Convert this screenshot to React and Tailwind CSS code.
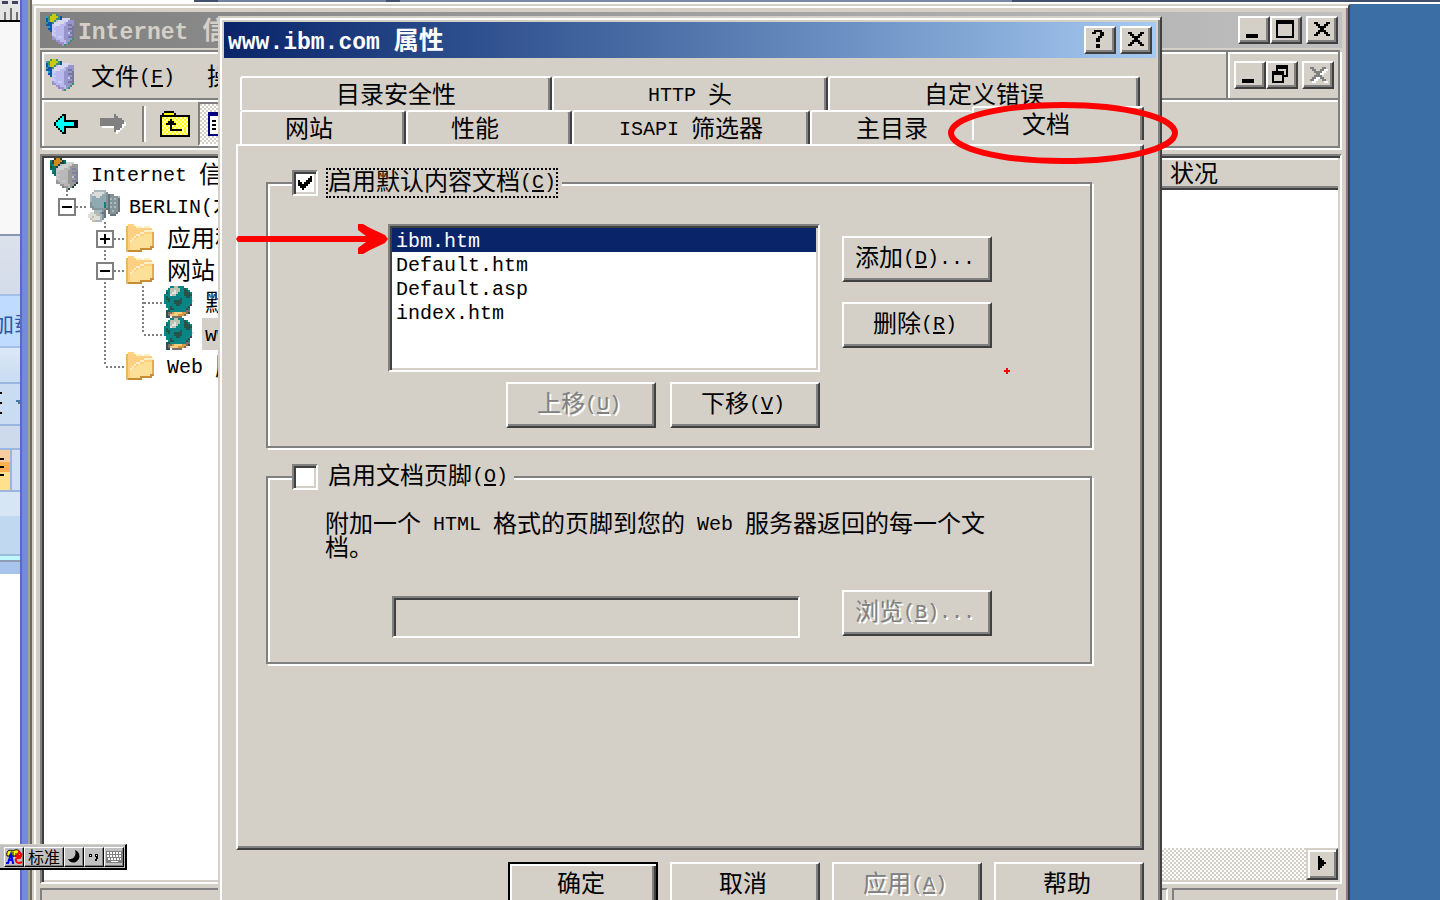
import { useState } from 'react';
import clsx from 'clsx';

// bitmaps: one character is one dot, looked up in the palette
const Bitmap = ({ rows, palette, size = 2, className }) => {
    const width = rows[0].length;
    return (
        <svg
            width={width * size}
            height={rows.length * size}
            viewBox={`0 0 ${width} ${rows.length}`}
            shapeRendering="crispEdges"
            className={clsx('block shrink-0', className)}
            aria-hidden="true"
        >
            {rows.map((row, y) =>
                row.split('').map((dot, x) =>
                    dot === '.' ? null : <rect key={`${x}-${y}`} x={x} y={y} width="1" height="1" fill={palette[dot]} />
                )
            )}
        </svg>
    );
};

const black = { x: '#000', w: '#fff', g: '#808080' };

const glyphs = {
    min: ['.........', '.........', '.........', '.........', '.........', '.........', '.........', '.xxxxxx..', '.xxxxxx..'],
    max: ['xxxxxxxxx', 'xxxxxxxxx', 'x.......x', 'x.......x', 'x.......x', 'x.......x', 'x.......x', 'x.......x', 'xxxxxxxxx'],
    restore: ['..xxxxxx', '..xxxxxx', '..x....x', 'xxxxxx.x', 'xxxxxx.x', 'x....xxx', 'x....x..', 'x....x..', 'xxxxxx..'],
    close: ['.........', '.xx....xx', '..xx..xx.', '...xxxx..', '....xx...', '...xxxx..', '..xx..xx.', '.xx....xx', '.........'],
    closeOff: ['..........', '.gg....gg.', '..gg..ggww', '...ggggww.', '....ggww..', '...gggg...', '..ggwwgg..', '.ggww..gg.', '..ww....ww'],
    help: ['..xxxx..', '.xx..xx.', '.....xx.', '....xx..', '...xx...', '...xx...', '........', '...xx...', '...xx...'],
    tick: ['......x', '.....xx', 'x...xxx', 'xx.xxx.', 'xxxxx..', '.xxx...', '..x....'],
    right: ['x...', 'xx..', 'xxx.', 'xxxx', 'xxx.', 'xx..', 'x...']
};

const serverRows = [
    '..gyyg........',
    'cgyyyygb......',
    'bgyyyggbwwww..',
    'bcyyglwwwwwppp',
    'gbbgwwwwwlpppp',
    'bbbLwwwlllpddp',
    '.cbLLllllppppd',
    '.bbLlllllppddd',
    '..bLLllllppppd',
    '...LlllllppLdd',
    '...LLllllppppd',
    '...pllLLlppddd',
    '...ppllllppppg',
    '.....pplllppg.',
    '......mpplpg..',
    '........pg....'
];
const serverColors = { g: '#3f8f6a', y: '#c8c80c', b: '#0a58a8', c: '#2c9cd0', l: '#b9b9ee', L: '#cacaf6', w: '#d8d8f4', p: '#9696cc', d: '#77779c', m: '#c070d8' };
const rootColors = { g: '#24423c', y: '#d08a1c', b: '#0c6c6c', c: '#0c8c84', l: '#b8b8b8', L: '#c4c4c8', w: '#d0d0d0', p: '#989898', d: '#8080a0', m: '#808080' };

const computerRows = [
    '...llllll.......',
    '..lwwwwwlp......',
    '.lwwwwwbbpdpp...',
    '.lbbwwbbbpdppppl',
    '.lbbbbbbbpdlplpd',
    '.lbbbbbbbpdppppd',
    '.pbbbbbbtpdlplpd',
    '.pbbbbbbtpdppppd',
    '.ppbbbbbtpdlplpd',
    '..pppppppddppppd',
    '...llllpd.dplppd',
    '.wwlllpdd.dpppd.',
    'wwwwsllpd..ddd..',
    'wwswwwlpd.......',
    '.swwwwlp........',
    '..sslll.........'
];
const computerColors = { l: '#a8b8bc', w: '#dcdcd8', b: '#90aab4', p: '#849498', d: '#68747c', t: '#108070', s: '#c8bca8' };

const folderRows = [
    '.fff..........',
    'sffffwww.www..',
    'sffffffffffff.',
    'sffffffffwwwww',
    'sffffffwwffffe',
    'sffffwwffyyyye',
    'sfffwfyyyyyyye',
    'sffwfyyyyyyyye',
    'sfwyyyyyyyyyye',
    'sfyyyyyyyyyyye',
    'sfyyyyyyyyyyye',
    'sfyyyyyyyyyyoo',
    'sfyyyyyoooooo.',
    'sooooooo......'
];
const folderColors = { s: '#e8b860', f: '#fcd080', w: '#fff0c8', y: '#fce098', e: '#e0ac54', o: '#c88c34' };

const siteRows = [
    '...ttwwttt.....',
    '..twwwwwttgt...',
    '.ttwwlwwttggt..',
    '.gtwllwtttgggt.',
    'tttlwwttttgggg.',
    'tgtttttttttggt.',
    'tggtttttgttttt.',
    'ttgttggggtttttl',
    'tttttggggttttt.',
    '.tttttggtttttg.',
    '.ttgttttttttg..',
    '..tggttttttgt..',
    '.ggttttttttpp..',
    '.gppoyyyyoopg..',
    '.gpyyyyooopl...',
    '.gg.ppppp......'
];
const siteColors = { t: '#088484', g: '#24544c', w: '#b8c4b0', l: '#e4e4dc', p: '#806c68', o: '#d89838', y: '#f4cc80' };

// CJK runs are set at 24px and Latin runs at 20px, so a Latin letter is half a
// CJK one. "&" goes before the accelerator key.
const Label = ({ text, large = false }) =>
    text.split(/([\u3000-\u303f\u4e00-\u9fff]+)/).filter(Boolean).map((run, i) => {
        if (/[\u3000-\u9fff]/.test(run)) return <span key={i}>{run}</span>;
        const [before, after] = run.split('&');
        return (
            <span key={i} className={clsx("font-['Liberation_Mono','Noto_Sans_CJK_SC',monospace] leading-3", large ? 'text-[23px]' : 'align-[2px] text-[20px]')}>
                {before}
                {after && <span className="underline underline-offset-2">{after[0]}</span>}
                {after && after.slice(1)}
            </span>
        );
    });

const raised = 'border-2 border-t-white border-l-white border-r-[#404040] border-b-[#404040] shadow-[inset_-2px_-2px_0_#808080]';
const sunken = 'border-2 border-t-[#808080] border-l-[#808080] border-r-white border-b-white shadow-[inset_2px_2px_0_#404040,inset_-2px_-2px_0_#d4d0c8]';
const etched = 'border-2 border-[#808080] shadow-[2px_2px_0_#fff,inset_2px_2px_0_#fff]';

const CaptionButton = ({ glyph, label, disabled }) => (
    <button aria-label={label} disabled={disabled} className={clsx('flex h-7 w-8 shrink-0 items-start bg-[#d4d0c8] pt-[2px] pl-1', raised)}>
        <Bitmap rows={glyphs[glyph]} palette={black} />
    </button>
);

const PushButton = ({ text, disabled, isDefault, onClick }) => (
    <button
        onClick={onClick}
        disabled={disabled}
        className={clsx(
            'h-[46px] w-[150px] shrink-0 whitespace-nowrap bg-[#d4d0c8] pr-1 pb-[6px] leading-6',
            isDefault ? 'border-2 border-black shadow-[inset_2px_2px_0_#fff,inset_-2px_-2px_0_#404040,inset_-4px_-4px_0_#808080]' : raised,
            disabled && 'text-[#808080] [text-shadow:2px_2px_0_#fff]'
        )}
    >
        <Label text={text} />
    </button>
);

const CheckLabel = ({ id, text, checked, onChange, focused }) => (
    <div className="-mt-4 ml-6 flex h-[30px] w-fit items-center gap-2 bg-[#d4d0c8] pr-1">
        <span className="grid place-items-center">
            <input
                id={id}
                type="checkbox"
                checked={checked}
                onChange={onChange}
                className={clsx('col-start-1 row-start-1 h-[26px] w-[26px] appearance-none bg-white', sunken)}
            />
            {checked && <Bitmap rows={glyphs.tick} palette={black} className="pointer-events-none col-start-1 row-start-1" />}
        </span>
        <label htmlFor={id} className={clsx('h-[30px] border-2 leading-5', focused ? 'border-dotted border-black' : 'border-transparent')}>
            <Label text={text} />
        </label>
    </div>
);

const Tab = ({ text, className, selected }) => (
    <button
        role="tab"
        aria-selected={selected}
        className={clsx('h-[34px] whitespace-nowrap rounded-t-[3px] border-t-2 border-l-2 border-white bg-[#d4d0c8] pb-[2px] leading-6', className)}
    >
        <Label text={text} />
    </button>
);

const tabEdge = 'border-r-2 border-r-[#404040] shadow-[inset_-2px_0_0_#808080]';

const upperTabs = ['目录安全性', 'HTTP 头', '自定义错误'];
const lowerTabs = ['网站', '性能', 'ISAPI 筛选器'];

const documents = ['ibm.htm', 'Default.htm', 'Default.asp', 'index.htm'];

const PropertiesDialog = () => {
    const [useDefault, setUseDefault] = useState(true);
    const [useFooter, setUseFooter] = useState(false);
    const [selected, setSelected] = useState('ibm.htm');

    return (
        <div
            role="dialog"
            aria-label="www.ibm.com 属性"
            className="absolute top-4 left-[218px] w-[944px] border-2 border-t-[#d4d0c8] border-l-[#d4d0c8] border-r-[#404040] border-b-[#404040] bg-[#d4d0c8] p-1 shadow-[inset_2px_2px_0_#fff,inset_-2px_-2px_0_#808080]"
        >
            <div className="flex h-9 items-center gap-1 bg-linear-to-r from-[#0a246a] to-[#a6caf0] px-1 text-white">
                <h2 className="flex-1 pb-1 text-[25px] leading-7 font-bold">
                    <Label text="www.ibm.com 属性" large />
                </h2>
                <CaptionButton glyph="help" label="帮助" />
                <CaptionButton glyph="close" label="关闭" />
            </div>

            <div className="px-3 pt-[18px] pb-3">
                <div role="tablist">
                    <div className="mx-1 grid grid-cols-[26fr_23fr_26fr]">
                        {upperTabs.map((text) => (
                            <Tab key={text} text={text} className={tabEdge} />
                        ))}
                    </div>
                    <div className="ml-1 grid grid-cols-[83fr_83fr_119fr_81fr_86fr]">
                        {lowerTabs.map((text) => (
                            <Tab key={text} text={text} className={clsx(tabEdge, text.length === 2 && 'pr-7')} />
                        ))}
                        <Tab text="主目录" />
                        <Tab text="文档" selected className={clsx('relative -mt-1 -mb-[2px] h-10 pr-6', tabEdge)} />
                    </div>
                </div>

                <div role="tabpanel" className={clsx('pt-9 pr-[50px] pb-[184px] pl-7', raised)}>
                    <div className={clsx('pb-[18px]', etched)}>
                        <CheckLabel id="use-default" text="启用默认内容文档(&C)" focused checked={useDefault} onChange={() => setUseDefault(!useDefault)} />
                        <div className="mt-[26px] ml-[120px] flex gap-[22px]">
                            <div className="flex w-[432px] flex-col gap-[10px]">
                                <select
                                    size={5}
                                    aria-label="默认内容文档"
                                    value={selected}
                                    onChange={(e) => setSelected(e.target.value)}
                                    className={clsx("h-[148px] w-full appearance-none overflow-hidden bg-white bg-none p-[2px] font-['Liberation_Mono',monospace] text-[20px] outline-none", sunken)}
                                >
                                    {documents.map((name) => (
                                        <option
                                            key={name}
                                            value={name}
                                            className="h-6 min-h-6 px-1 pt-[2px] pb-0 leading-5 checked:bg-[linear-gradient(#0a246a,#0a246a)] checked:[-webkit-text-fill-color:#fff]"
                                        >
                                            {name}
                                        </option>
                                    ))}
                                </select>
                                <div className="flex justify-end gap-[14px]">
                                    <PushButton text="上移(&U)" disabled />
                                    <PushButton text="下移(&V)" />
                                </div>
                            </div>
                            <div className="flex flex-col gap-5 pt-3">
                                <PushButton text="添加(&D)..." />
                                <PushButton text="删除(&R)" />
                            </div>
                        </div>
                    </div>

                    <div className={clsx('mt-7 pb-6', etched)}>
                        <CheckLabel id="use-footer" text="启用文档页脚(&O)" checked={useFooter} onChange={() => setUseFooter(!useFooter)} />
                        <p className="mt-[18px] ml-[57px] w-[672px] leading-6">
                            <Label text="附加一个 HTML 格式的页脚到您的 Web 服务器返回的每一个文档。" />
                        </p>
                        <div className="mt-8 ml-[124px] flex gap-[42px]">
                            <input type="text" aria-label="文档页脚" disabled={!useFooter} className={clsx('mt-[6px] h-[42px] w-[408px] bg-[#d4d0c8] px-1', sunken)} />
                            <PushButton text="浏览(&B)..." disabled={!useFooter} />
                        </div>
                    </div>
                </div>

                <div className="mt-3 flex justify-end gap-3">
                    <PushButton text="确定" isDefault />
                    <PushButton text="取消" />
                    <PushButton text="应用(&A)" disabled />
                    <PushButton text="帮助" />
                </div>
            </div>
        </div>
    );
};

// one 38x32 cell of the tree's dotted connectors
const Branch = ({ up, down, right, box }) => (
    <svg width="38" height="32" viewBox="0 0 38 32" shapeRendering="crispEdges" className="block shrink-0" aria-hidden="true">
        <g stroke="#808080" strokeWidth="2" strokeDasharray="2 2">
            {up && <path d="M19 0V16" />}
            {down && <path d="M19 16V32" />}
            {right && <path d="M20 17H40" />}
        </g>
        {box && <rect x="11" y="9" width="16" height="16" fill="#fff" stroke="#808080" strokeWidth="2" />}
        {box && <path d="M14 17H24" stroke="#000" strokeWidth="2" />}
        {box === 'plus' && <path d="M19 12V22" stroke="#000" strokeWidth="2" />}
    </svg>
);

const treeIcons = {
    root: <Bitmap rows={serverRows} palette={rootColors} />,
    computer: <Bitmap rows={computerRows} palette={computerColors} />,
    folder: <Bitmap rows={folderRows} palette={folderColors} />,
    site: <Bitmap rows={siteRows} palette={siteColors} />
};

const treeItems = [
    { text: 'Internet 信息服务', icon: 'root', cells: [] },
    { text: 'BERLIN(本地计算机)', icon: 'computer', cells: [{ up: true, right: true, box: 'minus' }] },
    { text: '应用程序池', icon: 'folder', cells: [{}, { up: true, down: true, right: true, box: 'plus' }] },
    { text: '网站', icon: 'folder', cells: [{}, { up: true, down: true, right: true, box: 'minus' }] },
    { text: '默认网站', icon: 'site', cells: [{}, { up: true, down: true }, { up: true, down: true, right: true }] },
    { text: 'www.ibm.com', icon: 'site', active: true, cells: [{}, { up: true, down: true }, { up: true, right: true }] },
    { text: 'Web 服务扩展', icon: 'folder', cells: [{}, { up: true, right: true }] }
];

const Tree = () => (
    <ul role="tree" className="w-[300px] shrink-0 overflow-hidden bg-white pl-1">
        {treeItems.map((item) => (
            <li key={item.text} role="treeitem" className="flex h-8 items-center whitespace-nowrap leading-6">
                {item.cells.map((cell, i) => (
                    <Branch key={i} {...cell} />
                ))}
                <span className="flex w-10 shrink-0 pl-[2px]">{treeIcons[item.icon]}</span>
                <span className={clsx('flex h-8 items-center px-[3px] pb-[2px]', item.active && 'bg-[#d4d0c8]')}>
                    <span><Label text={item.text} /></span>
                </span>
            </li>
        ))}
    </ul>
);

const backRows = [
    '....xx......',
    '...xcx......',
    '..xccx......',
    '.xcccxxxxxxx',
    'xcccccccccxx',
    'xcccccccccxx',
    '.xcccxxxxxxx',
    '..xccx......',
    '...xcx......',
    '....xx......'
];
const forwardRows = [
    '.......g.....',
    '.......gg....',
    'ggggggggggg..',
    'gggggggggggg.',
    'ggggggggggggw',
    'gggggggggggww',
    '.wwwwwwggggw.',
    '.......gggw..',
    '.......gww...',
    '........w....'
];
const upRows = [
    '..xxxxx........',
    '.xyyyyyx.......',
    'xxxxxxxxxxxxxxx',
    'xywywywywywywyx',
    'xwywyxywywywywx',
    'xywyxxxywywywyx',
    'xwyxxxxxywywywx',
    'xywywxwywywywyx',
    'xwywyxywywywywx',
    'xywywxxxxxxwywx',
    'xwywywywywywywx',
    'xywywywywywywyx',
    'xxxxxxxxxxxxxxx'
];

const ConsoleWindow = () => (
    <div className="mt-1 flex min-w-0 flex-1 flex-col border-2 border-b-0 border-t-[#d4d0c8] border-l-[#d4d0c8] border-r-[#404040] bg-[#d4d0c8] px-[6px] pt-[6px] shadow-[inset_2px_2px_0_#fff,inset_-2px_0_0_#808080]">
        <div className="flex h-9 shrink-0 items-center bg-linear-to-r from-[#808080] to-[#c0c0c0] pr-1 pl-[6px] text-[#d4d0c8]">
            <Bitmap rows={serverRows} palette={serverColors} />
            <h1 className="ml-1 flex-1 pb-1 text-[25px] leading-7 font-bold">
                <Label text="Internet 信息服务" large />
            </h1>
            <CaptionButton glyph="min" label="最小化" />
            <CaptionButton glyph="max" label="最大化" />
            <span className="w-1" />
            <CaptionButton glyph="close" label="关闭" />
        </div>

        <div className={clsx('mt-[2px] mr-[2px] shrink-0', etched)}>
            <div className="flex h-[46px] items-center pl-1">
                <Bitmap rows={serverRows} palette={serverColors} />
                <nav className="ml-[17px] flex flex-1 gap-8 leading-6">
                    <button><Label text="文件(&F)" /></button>
                    <button><Label text="操作(&A)" /></button>
                </nav>
                <div className="flex h-full items-center border-l-2 border-[#808080] pr-1 pl-[6px] shadow-[inset_2px_0_0_#fff]">
                    <CaptionButton glyph="min" label="最小化" />
                    <CaptionButton glyph="restore" label="还原" />
                    <span className="w-1" />
                    <CaptionButton glyph="closeOff" label="关闭" disabled />
                </div>
            </div>
            <div className="flex h-12 items-center border-t-2 border-[#808080] pt-[2px] pl-3 shadow-[inset_0_2px_0_#fff]">
                <button aria-label="后退"><Bitmap rows={backRows} palette={{ x: '#000', c: '#00ffff' }} /></button>
                <button aria-label="前进" disabled className="ml-[22px]"><Bitmap rows={forwardRows} palette={black} /></button>
                <span className="ml-4 h-9 w-1 border-l-2 border-[#808080] bg-white" />
                <button aria-label="上一级" className="ml-[14px]"><Bitmap rows={upRows} palette={{ x: '#000', y: '#ffff00', w: '#ffffc0' }} /></button>
                <button
                    aria-label="显示树"
                    className="ml-2 h-[44px] w-[46px] border-2 border-t-[#808080] border-l-[#808080] border-r-white border-b-white bg-[repeating-conic-gradient(#fff_0_25%,#d4d0c8_0_50%)] bg-size-[4px_4px] pl-2"
                >
                    <svg width="30" height="24" viewBox="0 0 30 24" shapeRendering="crispEdges" aria-hidden="true">
                        <path d="M0 0H30V24H0Z" fill="#000080" />
                        <path d="M2 4H28V22H2Z" fill="#fff" />
                        <path d="M4 9H8M4 13H8M4 17H8M14 9H24M14 13H24" stroke="#000" strokeWidth="2" />
                    </svg>
                </button>
            </div>
        </div>

        <div className="mt-[6px] flex min-h-0 flex-1 border-2 border-t-[#808080] border-l-[#808080] border-r-white border-b-white p-[2px] shadow-[inset_2px_2px_0_#404040,inset_-2px_-2px_0_#d4d0c8]">
            <Tree />
            <div className="flex min-w-0 flex-1 flex-col bg-white">
                <div className="flex h-8 shrink-0 border-t-2 border-t-white border-b-2 border-b-[#404040] bg-[#d4d0c8] shadow-[inset_0_-2px_0_#808080]">
                    <span className="flex-1" />
                    <span className="w-44 pl-2 leading-6">状况</span>
                </div>
                <div className="flex-1" />
                <div className="flex h-8 shrink-0 justify-end bg-[repeating-conic-gradient(#fff_0_25%,#d4d0c8_0_50%)] bg-size-[4px_4px]">
                    <button
                        aria-label="向右滚动"
                        className="flex h-8 w-8 items-start border-2 border-t-[#d4d0c8] border-l-[#d4d0c8] border-r-[#404040] border-b-[#404040] bg-[#d4d0c8] pt-[6px] pl-[10px] shadow-[inset_2px_2px_0_#fff,inset_-2px_-2px_0_#808080]"
                    >
                        <Bitmap rows={glyphs.right} palette={black} />
                    </button>
                </div>
            </div>
        </div>

        <div className="mt-1 mr-1 flex h-3 shrink-0 gap-1">
            <span className="flex-1 border-2 border-b-0 border-t-[#808080] border-l-[#808080] border-r-white" />
            <span className="w-[166px] border-2 border-b-0 border-t-[#808080] border-l-[#808080] border-r-white" />
        </div>
    </div>
);

// edge of the editor that is open behind the console window
const EditorEdge = () => (
    <div className="flex w-8 shrink-0 bg-white">
        <div className="flex w-5 flex-col overflow-hidden">
            <svg width="20" height="22" viewBox="0 0 20 22" shapeRendering="crispEdges" className="shrink-0" aria-hidden="true">
                <path d="M0 0H20V20H0Z" fill="#e4e4e4" />
                <path d="M2 2H8M12 2H18" stroke="#404060" strokeWidth="3" />
                <path d="M5 12V20M11 8V20M17 12V20" stroke="#707070" strokeWidth="2" />
                <path d="M0 21H20" stroke="#000" strokeWidth="2" />
            </svg>
            <div className="h-[212px] shrink-0 bg-[#f8f8f8]" />
            <div className="h-[60px] shrink-0 border-t-2 border-[#8898b0] bg-linear-to-b from-[#dce2ec] to-[#d4dcea]" />
            <div className="h-[54px] shrink-0 border-y-2 border-[#a4c0e8] bg-[#bfdbff] pt-[14px] text-[22px] leading-6 whitespace-nowrap text-[#3058a8]">
                <span className="-ml-2">加载</span>
            </div>
            <div className="h-[34px] shrink-0 bg-linear-to-b from-[#dce8f6] to-[#c8dcf2]" />
            <svg width="20" height="44" viewBox="0 0 20 44" shapeRendering="crispEdges" className="shrink-0" aria-hidden="true">
                <path d="M0 0H20V44H0Z" fill="#9ab6de" />
                <path d="M0 2H20V42H0Z" fill="#cadcf2" />
                <path d="M0 11H2M0 21H2M0 31H2" stroke="#000" strokeWidth="2" />
                <path d="M16 18H20V22H18V20H16Z" fill="#4878b0" />
            </svg>
            <div className="h-[22px] shrink-0 bg-[#ccdaec]" />
            <svg width="20" height="44" viewBox="0 0 20 44" shapeRendering="crispEdges" className="shrink-0" aria-hidden="true">
                <path d="M0 0H20V44H0Z" fill="#9ab6de" />
                <path d="M12 2H20V42H12Z" fill="#d0e0f4" />
                <path d="M0 2H10V14H0Z" fill="#f8cc9c" />
                <path d="M0 14H10V24H0Z" fill="#ffb050" />
                <path d="M0 24H10V42H0Z" fill="#ffe08c" />
                <path d="M0 11H4M0 19H4M0 27H4" stroke="#000" strokeWidth="2" />
            </svg>
            <div className="h-6 shrink-0 bg-[#d6e6f4]" />
            <div className="h-[40px] shrink-0 border-b-2 border-[#9cbcdc] bg-[#c0d8f0]" />
            <div className="h-1 shrink-0 bg-[#c0f8ff]" />
            <div className="h-[14px] shrink-0 border-t-2 border-[#8c9cb4] bg-[#a8c4ea]" />
        </div>
        <div className="w-2 border-l-2 border-[#5c68c8] bg-[#748bdc]" />
        <div className="w-1 border-r-2 border-[#6e6a5e] bg-[#a8a494]" />
    </div>
);

const imeCell = 'flex h-5 items-center justify-center border border-t-white border-l-white border-r-black border-b-black bg-[#c0c0c0] shadow-[inset_-1px_-1px_0_#808080]';

const ImeBar = () => (
    <div className="absolute top-[844px] left-0 flex h-[26px] w-[127px] items-center border-t border-r-2 border-b-2 border-t-[#d4d0c8] border-r-black border-b-black bg-[#c0c0c0] pl-1 text-black">
        <button aria-label="输入法" className={clsx('w-5', imeCell)}>
            <svg width="18" height="17" viewBox="0 0 18 17" aria-hidden="true">
                <path d="M2 8C1 3 4 1 8 3C12 0 17 3 15 8Z" fill="#ffff00" stroke="#000" strokeWidth="1" />
                <path d="M5 6V9M8 4V9M11 5V9" stroke="#000" strokeWidth="1" />
                <path d="M1 15H3L6 6L8 15H9M3 12H8" fill="none" stroke="#0000ff" strokeWidth="2" />
                <path d="M17 7L14 4L12 8H17M16 10C12 9 10 11 11 13C12 16 15 15 17 14" fill="none" stroke="#ff0000" strokeWidth="2" />
            </svg>
        </button>
        <button className={clsx('w-10 pb-[2px] text-base leading-4', imeCell)}>标准</button>
        <button aria-label="半角" className={clsx('w-5', imeCell)}>
            <svg width="12" height="13" viewBox="0 0 12 13" aria-hidden="true">
                <path d="M7 0C12 2 13 8 9 11C6 14 1 12 0 9C5 10 9 6 7 0Z" fill="#000" />
            </svg>
        </button>
        <button aria-label="标点" className={clsx('w-5', imeCell)}>
            <svg width="12" height="10" viewBox="0 0 12 10" shapeRendering="crispEdges" aria-hidden="true">
                <path d="M1 2H4V5H1ZM7 2H10V7H9V9H7V7H8V5H7Z" fill="#000" />
                <path d="M2 3H3V4H2ZM8 3H9V4H8Z" fill="#fff" />
            </svg>
        </button>
        <button aria-label="软键盘" className={clsx('w-5', imeCell)}>
            <svg width="17" height="12" viewBox="0 0 17 12" shapeRendering="crispEdges" aria-hidden="true">
                <path d="M0 0H17V12H0Z" fill="#808080" />
                <path d="M1 2H16M1 5H16M2 8H15" stroke="#fff" strokeWidth="2" strokeDasharray="2 1" />
                <path d="M5 10H12" stroke="#fff" strokeWidth="1" />
            </svg>
        </button>
    </div>
);

export default function App() {
    return (
        <div className="relative h-screen overflow-hidden bg-[#3a6ea5] font-['Noto_Sans_CJK_SC',sans-serif] text-[24px] text-black">
            <div className="flex h-full">
                <EditorEdge />
                <div className="relative flex min-w-0 flex-1 flex-col">
                    <div className="absolute inset-x-0 top-0 flex h-1 border-b-2 border-white">
                        <span className="w-[162px] bg-white" />
                        <span className="w-6 bg-[#40506e]" />
                        <span className="w-[168px] bg-[#7082a0]" />
                        <span className="w-[14px] bg-[#40506e]" />
                        <span className="w-[612px] bg-[#7a88a8]" />
                        <span className="flex-1 bg-[#40506e]" />
                    </div>
                    <div className="flex min-h-0 flex-1 pr-[90px]">
                        <ConsoleWindow />
                    </div>
                </div>
            </div>

            <PropertiesDialog />
            <ImeBar />

            {/* red pen marks */}
            <svg className="pointer-events-none absolute top-0 left-0" width="1200" height="400" viewBox="0 0 1200 400" aria-hidden="true">
                <ellipse cx="1063" cy="133" rx="112" ry="28" fill="none" stroke="#ff0000" strokeWidth="6" />
                <path d="M236 239L238 236H366L358 230V224H363L370 228L385 235L388 239L385 243L370 250L363 254H358V248L366 242H238Z" fill="#ff0000" />
                <path d="M1004 371H1010M1007 368V374" stroke="#ff0000" strokeWidth="2" />
            </svg>
        </div>
    );
}
